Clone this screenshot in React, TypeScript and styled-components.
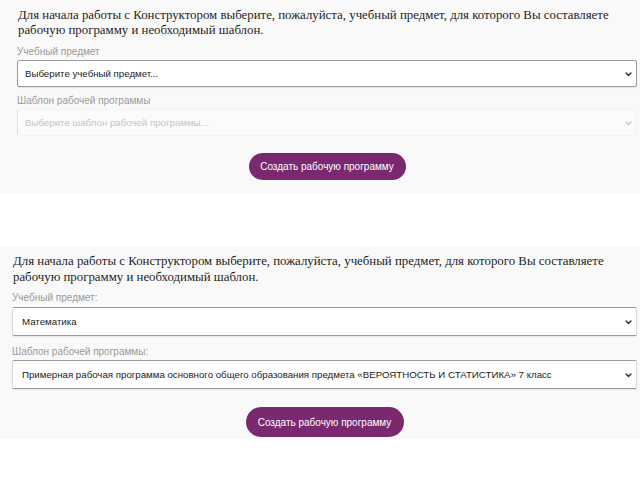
import styled, { createGlobalStyle } from 'styled-components';

const GlobalStyle = createGlobalStyle`
  body {
    margin: 0;
    background: #fff;
  }
`;

const Page = styled.div`
  display: flex;
  flex-direction: column;
  gap: 52px;
`;

const Panel = styled.section<{ $big?: boolean }>`
  background: #f9f9f9;
  padding: ${p => (p.$big ? '7px 3px 2px 12px' : '8px 3px 14px 17px')};
  display: flex;
  flex-direction: column;
`;

const Intro = styled.p<{ $big?: boolean }>`
  margin: 0 0 0 1px;
  font-family: "Liberation Serif", serif;
  font-size: ${p => (p.$big ? '12.85px' : '12.85px')};
  line-height: ${p => (p.$big ? '16px' : '15px')};
  color: #1e1e1e;
`;

const Label = styled.label<{ $big?: boolean; $second?: boolean }>`
  display: block;
  margin: ${p =>
    p.$big ? (p.$second ? '10px 0 2px' : '7px 0 3px') : '8px 0 2px'};
  font-family: "Liberation Sans", Arial, sans-serif;
  font-size: 10px;
  line-height: 12px;
  color: #9a9a9a;
`;

const SelectWrap = styled.div`
  position: relative;
`;

const Select = styled.select<{ $big?: boolean }>`
  display: block;
  width: 100%;
  height: ${p => (p.$big ? '29px' : '27px')};
  padding: 0 20px 0 ${p => (p.$big ? '9px' : '7px')};
  appearance: none;
  font-family: "Liberation Sans", Arial, sans-serif;
  font-size: 9.7px;
  color: #222;
  background: #fff;
  border: 1px solid ${p => (p.$big ? '#d6d6d6' : '#9a9a9a')};
  border-top-color: #9a9a9a;
  border-bottom-color: #9a9a9a;
  border-radius: 2px;
  box-shadow: 0 1px 1px rgba(0, 0, 0, 0.08);
  outline: none;

  &:disabled {
    background: #fbfbfb;
    color: #c4c4c4;
    border-color: #f3f3f3;
    border-left-color: #dedede;
    box-shadow: none;
    opacity: 1;
  }
`;

const Chevron = styled.svg<{ $muted?: boolean }>`
  position: absolute;
  right: 5px;
  top: 50%;
  width: 7px;
  height: 5px;
  margin-top: -2px;
  pointer-events: none;
  stroke: ${p => (p.$muted ? '#c8c8c8' : '#333')};
`;

const Arrow = ({ muted }: { muted?: boolean }) => (
  <Chevron $muted={muted} viewBox="0 0 7 5" fill="none">
    <path d="M1 1 L3.5 3.6 L6 1" strokeWidth="1.4" strokeLinecap="round" strokeLinejoin="round" />
  </Chevron>
);

const Actions = styled.div<{ $big?: boolean }>`
  display: flex;
  justify-content: center;
  margin-top: ${p => (p.$big ? '18px' : '17px')};
`;

const Button = styled.button<{ $big?: boolean }>`
  height: ${p => (p.$big ? '30px' : '27px')};
  width: ${p => (p.$big ? '158px' : '157px')};
  border: none;
  border-radius: 15px;
  background: #7a286f;
  color: #fff;
  font-family: "Liberation Sans", Arial, sans-serif;
  font-size: 10px;
  cursor: pointer;
`;

const INTRO =
  'Для начала работы с Конструктором выберите, пожалуйста, учебный предмет, для которого Вы составляете рабочую программу и необходимый шаблон.';

const App = () => {
  return (
    <Page>
      <GlobalStyle />
      <Panel>
        <Intro>{INTRO}</Intro>
        <Label>Учебный предмет</Label>
        <SelectWrap>
          <Select defaultValue="">
            <option value="">Выберите учебный предмет...</option>
          </Select>
          <Arrow />
        </SelectWrap>
        <Label>Шаблон рабочей программы</Label>
        <SelectWrap>
          <Select disabled defaultValue="">
            <option value="">Выберите шаблон рабочей программы...</option>
          </Select>
          <Arrow muted />
        </SelectWrap>
        <Actions>
          <Button>Создать рабочую программу</Button>
        </Actions>
      </Panel>

      <Panel $big>
        <Intro $big>{INTRO}</Intro>
        <Label $big>Учебный предмет:</Label>
        <SelectWrap>
          <Select $big defaultValue="math">
            <option value="math">Математика</option>
          </Select>
          <Arrow />
        </SelectWrap>
        <Label $big $second>Шаблон рабочей программы:</Label>
        <SelectWrap>
          <Select $big defaultValue="prob">
            <option value="prob">
              Примерная рабочая программа основного общего образования предмета «ВЕРОЯТНОСТЬ И СТАТИСТИКА» 7 класс
            </option>
          </Select>
          <Arrow />
        </SelectWrap>
        <Actions $big>
          <Button $big>Создать рабочую программу</Button>
        </Actions>
      </Panel>
    </Page>
  );
};

export default App;
